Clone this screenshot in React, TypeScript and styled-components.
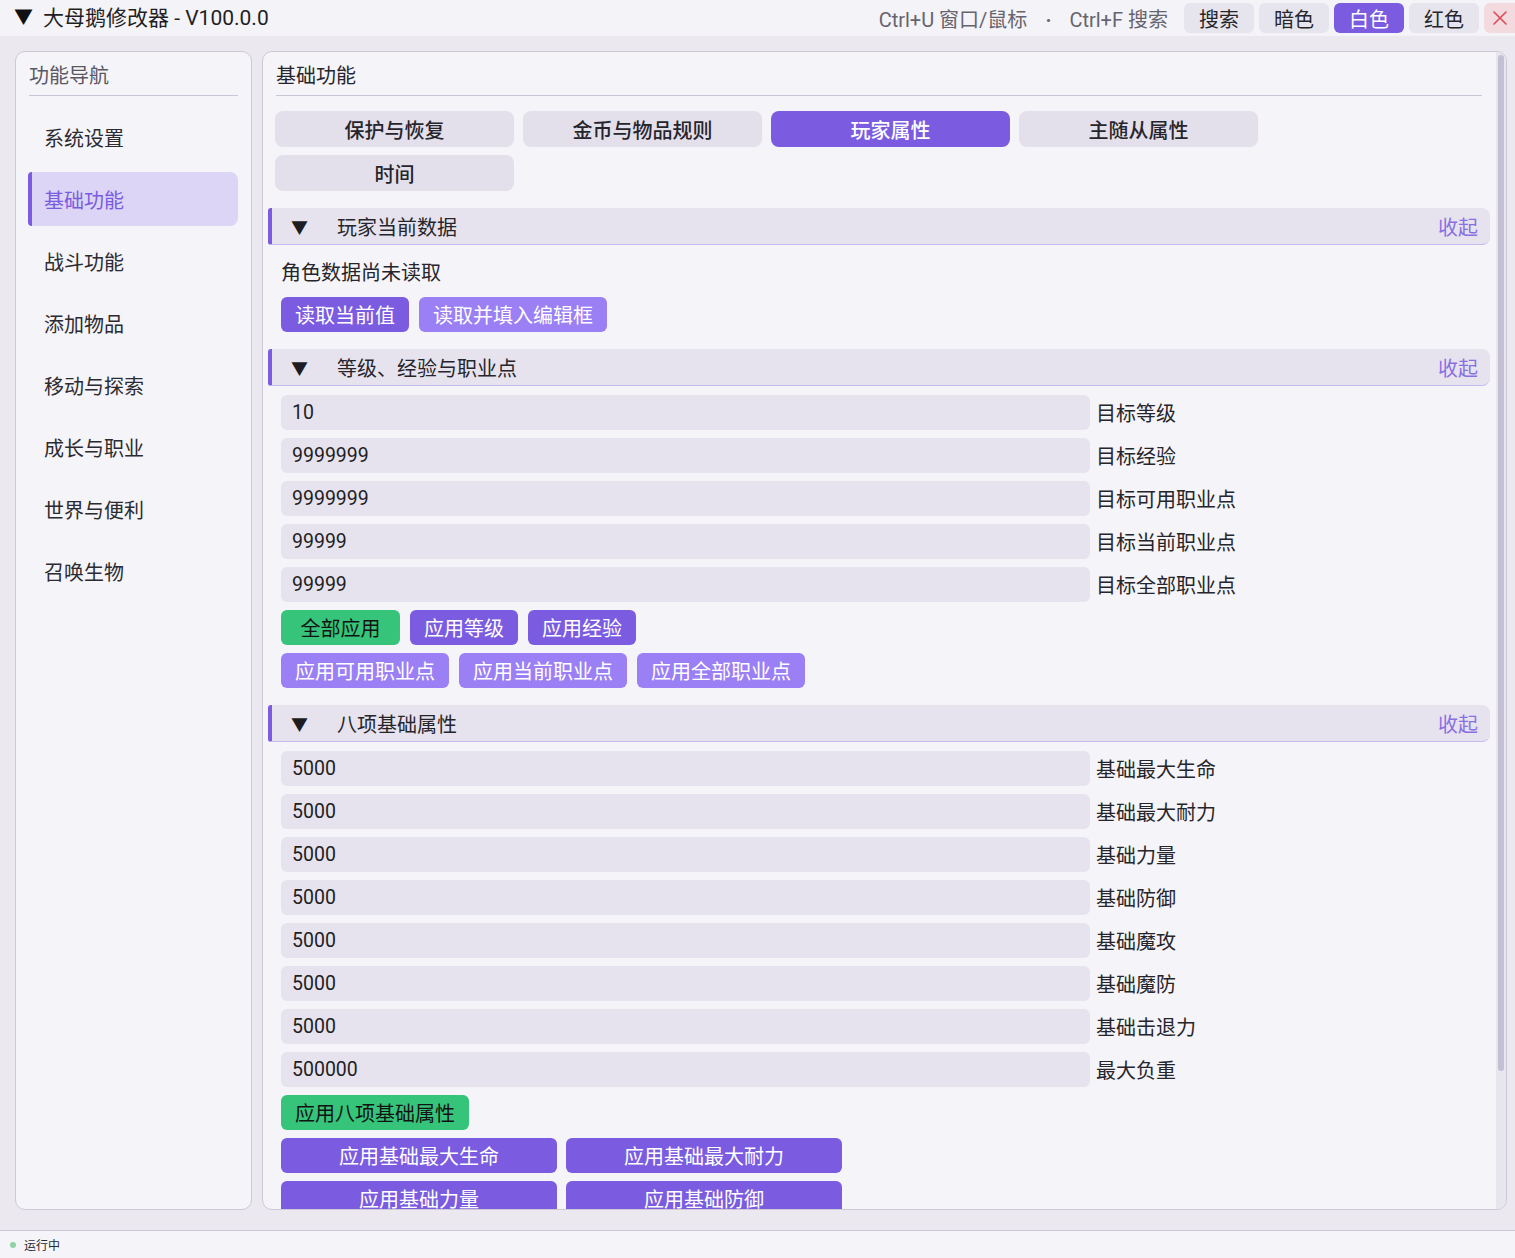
import styled, { createGlobalStyle } from 'styled-components';

const GlobalStyle = createGlobalStyle`
  html, body {
    margin: 0;
    padding: 0;
    background: #ebe9ef;
  }
  body {
    font-family: "Roboto", "Noto Sans CJK SC", sans-serif;
    color: #232228;
  }
  * { box-sizing: border-box; }
`;

const purple = '#7b5ce1';
const lightPurple = '#9b80f5';
const green = '#35c47a';

const NAV = ['系统设置', '基础功能', '战斗功能', '添加物品', '移动与探索', '成长与职业', '世界与便利', '召唤生物'];
const TABS = ['保护与恢复', '金币与物品规则', '玩家属性', '主随从属性', '时间'];

const LEVEL_FIELDS = [
  { value: '10', label: '目标等级' },
  { value: '9999999', label: '目标经验' },
  { value: '9999999', label: '目标可用职业点' },
  { value: '99999', label: '目标当前职业点' },
  { value: '99999', label: '目标全部职业点' },
];

const BASE_FIELDS = [
  { value: '5000', label: '基础最大生命' },
  { value: '5000', label: '基础最大耐力' },
  { value: '5000', label: '基础力量' },
  { value: '5000', label: '基础防御' },
  { value: '5000', label: '基础魔攻' },
  { value: '5000', label: '基础魔防' },
  { value: '5000', label: '基础击退力' },
  { value: '500000', label: '最大负重' },
];

const BASE_APPLY = ['应用基础最大生命', '应用基础最大耐力', '应用基础力量', '应用基础防御', '应用基础魔攻', '应用基础魔防', '应用基础击退力', '应用最大负重'];

const App = () => {
  return (
    <>
      <GlobalStyle />
      <Window>
        <TitleBar>
          <AppTitle>
            <TitleArrow>▼</TitleArrow>
            大母鹅修改器 - V100.0.0
          </AppTitle>
          <TitleRight>
            <Hint>Ctrl+U 窗口/鼠标<Sep>·</Sep>Ctrl+F 搜索</Hint>
            <BarButton>搜索</BarButton>
            <BarButton>暗色</BarButton>
            <BarButton $active>白色</BarButton>
            <BarButton>红色</BarButton>
            <CloseButton>
              <svg width="18" height="18" viewBox="0 0 18 18" fill="none">
                <path d="M3 3l12 12M15 3L3 15" stroke="#de4a55" strokeWidth="1.6" strokeLinecap="round" />
              </svg>
            </CloseButton>
          </TitleRight>
        </TitleBar>

        <Main>
          <Sidebar>
            <PanelTitle $inset={13}>功能导航</PanelTitle>
            <NavList>
              {NAV.map(item => (
                <NavItem key={item} $active={item === '基础功能'}>{item}</NavItem>
              ))}
            </NavList>
          </Sidebar>

          <Content>
            <Viewport>
              <PanelTitle $inset={8} $dark>基础功能</PanelTitle>
              <Tabs>
                {TABS.map(tab => (
                  <Tab key={tab} $active={tab === '玩家属性'}>{tab}</Tab>
                ))}
              </Tabs>

              <Section>
                <SectionHeader>
                  <Arrow>▼</Arrow>
                  <SectionTitle>玩家当前数据</SectionTitle>
                  <Collapse>收起</Collapse>
                </SectionHeader>
                <SectionBody>
                  <Note>角色数据尚未读取</Note>
                  <ButtonRow>
                    <ActionButton $tone="purple">读取当前值</ActionButton>
                    <ActionButton $tone="light">读取并填入编辑框</ActionButton>
                  </ButtonRow>
                </SectionBody>
              </Section>

              <Section>
                <SectionHeader>
                  <Arrow>▼</Arrow>
                  <SectionTitle>等级、经验与职业点</SectionTitle>
                  <Collapse>收起</Collapse>
                </SectionHeader>
                <SectionBody>
                  {LEVEL_FIELDS.map(f => (
                    <FieldRow key={f.label}>
                      <Field defaultValue={f.value} />
                      <FieldLabel>{f.label}</FieldLabel>
                    </FieldRow>
                  ))}
                  <ButtonRow>
                    <ActionButton $tone="green" $minWidth={119}>全部应用</ActionButton>
                    <ActionButton $tone="purple">应用等级</ActionButton>
                    <ActionButton $tone="purple">应用经验</ActionButton>
                  </ButtonRow>
                  <ButtonRow>
                    <ActionButton $tone="light">应用可用职业点</ActionButton>
                    <ActionButton $tone="light">应用当前职业点</ActionButton>
                    <ActionButton $tone="light">应用全部职业点</ActionButton>
                  </ButtonRow>
                </SectionBody>
              </Section>

              <Section>
                <SectionHeader>
                  <Arrow>▼</Arrow>
                  <SectionTitle>八项基础属性</SectionTitle>
                  <Collapse>收起</Collapse>
                </SectionHeader>
                <SectionBody>
                  {BASE_FIELDS.map(f => (
                    <FieldRow key={f.label}>
                      <Field defaultValue={f.value} />
                      <FieldLabel>{f.label}</FieldLabel>
                    </FieldRow>
                  ))}
                  <ButtonRow>
                    <ActionButton $tone="green">应用八项基础属性</ActionButton>
                  </ButtonRow>
                  <ApplyGrid>
                    {BASE_APPLY.map(b => (
                      <GridButton key={b}>{b}</GridButton>
                    ))}
                  </ApplyGrid>
                </SectionBody>
              </Section>
            </Viewport>
            <ScrollTrack>
              <ScrollThumb />
            </ScrollTrack>
          </Content>
        </Main>

        <StatusBar>
          <Dot />
          运行中
        </StatusBar>
      </Window>
    </>
  );
};

const Window = styled.div`
  width: 1515px;
  height: 1258px;
  display: flex;
  flex-direction: column;
  overflow: hidden;
`;

const TitleBar = styled.div`
  height: 36px;
  flex: 0 0 36px;
  background: #f4f3f7;
  display: flex;
  align-items: center;
  justify-content: space-between;
  padding-left: 14px;
`;

const AppTitle = styled.div`
  display: flex;
  align-items: center;
  font-size: 21px;
  line-height: 26px;
  color: #1f1e24;
`;

const TitleArrow = styled.span`
  font-size: 19px;
  margin-right: 10px;
  color: #111;
`;

const TitleRight = styled.div`
  display: flex;
  align-items: center;
  gap: 5px;
`;

const Hint = styled.span`
  font-size: 20px;
  color: #66646e;
  margin-right: 11px;
`;

const Sep = styled.span`
  margin: 0 18px;
  font-weight: 700;
`;

const BarButton = styled.div<{ $active?: boolean }>`
  height: 30px;
  padding: 0 15px;
  border-radius: 6px;
  display: flex;
  align-items: center;
  font-size: 20px;
  background: ${({ $active }) => ($active ? purple : '#e6e4ed')};
  color: ${({ $active }) => ($active ? '#fff' : '#26252b')};
`;

const CloseButton = styled.div`
  width: 31px;
  height: 30px;
  border-radius: 6px 0 0 6px;
  background: #f2dadf;
  display: flex;
  align-items: center;
  justify-content: center;
`;

const Main = styled.div`
  flex: 1;
  min-height: 0;
  display: flex;
  gap: 10px;
  padding: 15px 8px 20px 15px;
`;

const Panel = styled.div`
  background: #f5f4f8;
  border: 1px solid #cdc9d7;
  border-radius: 10px;
`;

const Sidebar = styled(Panel)`
  width: 237px;
  flex: 0 0 237px;
  display: flex;
  flex-direction: column;
`;

const PanelTitle = styled.div<{ $inset: number; $dark?: boolean }>`
  margin: 0 ${({ $inset }) => $inset}px;
  padding: 12px 0 6px;
  line-height: 25px;
  font-size: 20px;
  color: ${({ $dark }) => ($dark ? '#26252b' : '#5a5862')};
  border-bottom: 1px solid #cbc6d6;
`;

const NavList = styled.div`
  display: flex;
  flex-direction: column;
  gap: 8px;
  padding: 14px 13px 0 12px;
`;

const NavItem = styled.div<{ $active?: boolean }>`
  height: 54px;
  display: flex;
  align-items: center;
  padding-left: 12px;
  font-size: 20px;
  border-radius: 4px 8px 8px 4px;
  border-left: 4px solid ${({ $active }) => ($active ? purple : 'transparent')};
  background: ${({ $active }) => ($active ? '#dcd5f5' : 'transparent')};
  color: ${({ $active }) => ($active ? '#7a5ce0' : '#2c2b31')};
`;

const Content = styled(Panel)`
  flex: 1;
  min-width: 0;
  display: flex;
  overflow: hidden;
`;

const Viewport = styled.div`
  flex: 1;
  min-width: 0;
  overflow: hidden;
  padding: 0 6px 0 5px;
`;

const ScrollTrack = styled.div`
  width: 10px;
  flex: 0 0 10px;
  background: #e7e5ed;
  padding: 3px 2px 0 2px;
`;

const ScrollThumb = styled.div`
  height: 1016px;
  width: 6px;
  border-radius: 3px;
  background: #c4bfd2;
`;

const Tabs = styled.div`
  display: flex;
  flex-wrap: wrap;
  gap: 8px 9px;
  margin: 15px 8px 0 7px;
`;

const Tab = styled.div<{ $active?: boolean }>`
  width: 239px;
  height: 36px;
  border-radius: 8px;
  display: flex;
  align-items: center;
  justify-content: center;
  font-size: 20px;
  font-weight: 500;
  background: ${({ $active }) => ($active ? purple : '#e3e0ec')};
  color: ${({ $active }) => ($active ? '#fff' : '#26252b')};
`;

const Section = styled.div`
  margin-top: 17px;

  & + & {
    margin-top: 0;
  }
`;

const SectionHeader = styled.div`
  height: 37px;
  display: flex;
  align-items: center;
  padding: 0 12px 0 19px;
  background: #e6e3ee;
  border-left: 4px solid ${purple};
  border-bottom: 1px solid #c6baf0;
  border-radius: 3px 8px 8px 3px;
`;

const Arrow = styled.span`
  font-size: 17px;
  color: #1d1c22;
  width: 46px;
`;

const SectionTitle = styled.span`
  flex: 1;
  font-size: 20px;
  color: #26252b;
`;

const Collapse = styled.span`
  font-size: 20px;
  color: #8a6fe2;
`;

const SectionBody = styled.div`
  display: flex;
  flex-direction: column;
  gap: 8px;
  padding: 9px 0 17px 13px;
`;

const Note = styled.div`
  height: 35px;
  display: flex;
  align-items: center;
  font-size: 20px;
  color: #26252b;
`;

const ButtonRow = styled.div`
  display: flex;
  gap: 10px;
`;

const toneBg = { purple, light: lightPurple, green } as const;

const ActionButton = styled.div<{ $tone: keyof typeof toneBg; $minWidth?: number }>`
  height: 35px;
  min-width: ${({ $minWidth }) => ($minWidth ? `${$minWidth}px` : 'auto')};
  padding: 0 14px;
  border-radius: 6px;
  display: flex;
  align-items: center;
  justify-content: center;
  font-size: 20px;
  background: ${({ $tone }) => toneBg[$tone]};
  color: ${({ $tone }) => ($tone === 'green' ? '#121212' : '#fff')};
`;

const FieldRow = styled.div`
  display: grid;
  grid-template-columns: 809px 1fr;
  gap: 6px;
  align-items: center;
`;

const Field = styled.input`
  height: 35px;
  border: none;
  outline: none;
  border-radius: 6px;
  background: #e6e3ee;
  padding: 0 11px;
  font-family: "Roboto", "Noto Sans CJK SC", sans-serif;
  font-size: 19.5px;
  color: #1f1e24;
`;

const FieldLabel = styled.span`
  font-size: 20px;
  color: #26252b;
`;

const ApplyGrid = styled.div`
  display: grid;
  grid-template-columns: repeat(2, 276px);
  gap: 8px 9px;
`;

const GridButton = styled.div`
  height: 35px;
  border-radius: 6px;
  display: flex;
  align-items: center;
  justify-content: center;
  font-size: 20px;
  background: ${purple};
  color: #fff;
`;

const StatusBar = styled.div`
  height: 28px;
  flex: 0 0 28px;
  display: flex;
  align-items: center;
  gap: 8px;
  padding-left: 10px;
  background: #f5f4f8;
  border-top: 1px solid #cbc7d6;
  font-size: 12px;
  color: #2a2930;
`;

const Dot = styled.span`
  width: 6px;
  height: 6px;
  border-radius: 50%;
  background: #8fd3a5;
`;

export default App;
